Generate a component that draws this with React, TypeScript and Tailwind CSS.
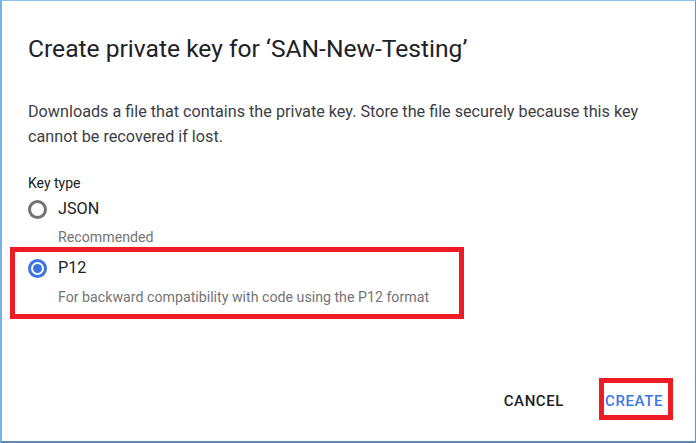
export default function App() {
  return (
    <div className="w-[696px] h-[443px] bg-white border-l-2 border-t border-r border-b-2 border-l-[#74b3e3] border-t-[#8cc3ec] border-r-[#6b93b8] border-b-[#5f88ad] flex flex-col font-['Roboto',sans-serif]">
      <h1 className="pt-[32px] pl-[26px] text-[24.6px] leading-[32px] text-[#202124]">
        Create private key for ‘SAN-New-Testing’
      </h1>
      <p className="mt-[34px] pl-[26px] pr-[30px] text-[16.2px] leading-[25px] text-[#3c4043]">
        Downloads a file that contains the private key. Store the file securely because this key cannot be recovered if
        lost.
      </p>
      <div className="mt-[24px] pl-[26px] text-[14px] leading-[20px] text-[#202124]">Key type</div>

      <div className="mt-[4px] pl-[26px] flex items-center gap-[11px] h-[24px]">
        <RadioDot checked={false} />
        <span className="text-[16.2px] text-[#202124]">JSON</span>
      </div>
      <div className="mt-[6px] pl-[56px] text-[14.2px] leading-[20px] text-[#757575]">Recommended</div>

      <div className="relative mt-[9px]">
        <div className="pl-[26px] flex items-center gap-[11px] h-[24px]">
          <RadioDot checked={true} />
          <span className="text-[16.2px] text-[#202124]">P12</span>
        </div>
        <div className="mt-[7px] pl-[56px] text-[14.2px] leading-[20px] text-[#757575]">
          For backward compatibility with code using the P12 format
        </div>
        {/* red annotation box */}
        <span className="absolute left-[8px] top-[-9px] w-[454px] h-[72px] border-[5px] border-[#ed1c24]" />
      </div>

      <div className="mt-auto mb-[28px] flex justify-end items-center pr-[32px] gap-[41px]">
        <button className="text-[15px] leading-[20px] font-medium tracking-[0.6px] text-[#202124]">CANCEL</button>
        <span className="relative">
          <button className="text-[15px] leading-[20px] font-medium tracking-[0.6px] text-[#3b78e7]">CREATE</button>
          <span className="absolute left-[-6px] top-[-11px] w-[74px] h-[42px] border-[5px] border-[#ed1c24]" />
        </span>
      </div>
    </div>
  );
}

function RadioDot({ checked }: { checked: boolean }) {
  return checked ? (
    <span className="w-[19px] h-[19px] rounded-full border-[3px] border-[#3b73e0] flex items-center justify-center">
      <span className="w-[9px] h-[9px] rounded-full bg-[#3b73e0]" />
    </span>
  ) : (
    <span className="w-[19px] h-[19px] rounded-full border-[3px] border-[#737373]" />
  );
}
